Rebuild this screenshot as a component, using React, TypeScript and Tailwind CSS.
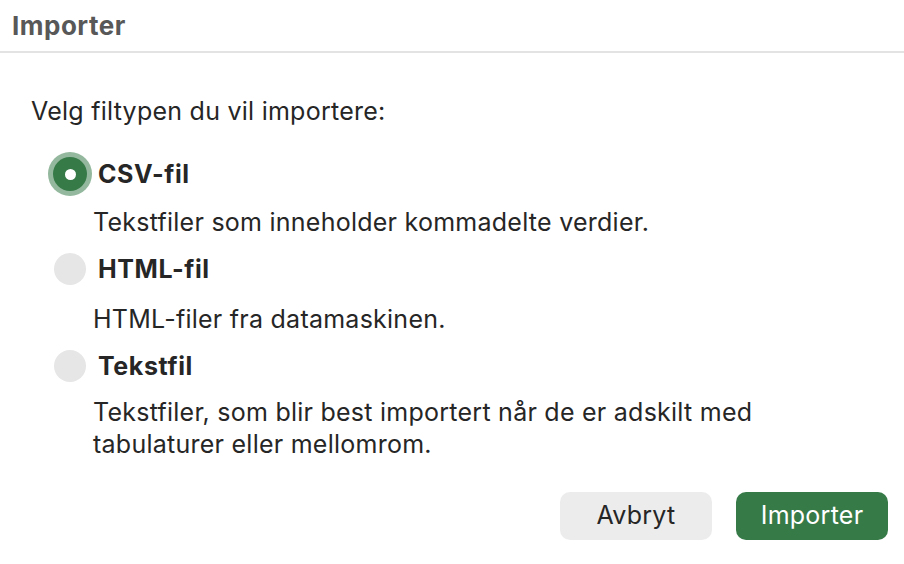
import React from "react";

const font = { fontFamily: "Inter, 'Noto Sans', sans-serif" };

function Radio({ checked }: { checked?: boolean }) {
  if (checked) {
    return (
      <div className="w-[44px] h-[44px] rounded-full bg-[#93b89d] flex items-center justify-center shrink-0">
        <div className="w-[34px] h-[34px] rounded-full bg-[#367a48] flex items-center justify-center">
          <div className="w-[11px] h-[11px] rounded-full bg-white" />
        </div>
      </div>
    );
  }
  return (
    <div className="w-[44px] h-[44px] flex items-center justify-center shrink-0">
      <div className="w-[32px] h-[32px] rounded-full bg-[#e6e6e6]" />
    </div>
  );
}

export default function App() {
  return (
    <div className="w-[904px] h-[564px] bg-white text-[#262626] overflow-hidden tracking-[0.25px]" style={font}>
      <div className="h-[53px] border-b-2 border-[#e3e3e3] flex items-center px-[12px]">
        <span className="text-[26px] font-bold text-[#585858] leading-none tracking-[0.5px]">Importer</span>
      </div>
      <div className="pt-[42px] pl-[31px]">
        <div className="text-[25px] leading-[32px]">Velg filtypen du vil importere:</div>
        <div className="mt-[23px] pl-[17px]">
          <div className="flex items-center gap-[6px] h-[48px]">
            <Radio checked />
            <span className="text-[25px] font-bold leading-none tracking-[0.6px]">CSV-fil</span>
          </div>
          <div className="pl-[45px] text-[25px] leading-[32px] mt-[8px]">Tekstfiler som inneholder kommadelte verdier.</div>
          <div className="flex items-center gap-[6px] h-[48px] mt-[7px]">
            <Radio />
            <span className="text-[25px] font-bold leading-none tracking-[0.6px]">HTML-fil</span>
          </div>
          <div className="pl-[45px] text-[25px] leading-[32px] mt-[10px]">HTML-filer fra datamaskinen.</div>
          <div className="flex items-center gap-[6px] h-[48px] mt-[7px]">
            <Radio />
            <span className="text-[25px] font-bold leading-none tracking-[0.6px]">Tekstfil</span>
          </div>
          <div className="pl-[45px] text-[25px] leading-[32px] mt-[6px]">
            Tekstfiler, som blir best importert når de er adskilt med
            <br />
            tabulaturer eller mellomrom.
          </div>
        </div>
      </div>
      <div className="flex justify-end gap-[24px] pr-[16px] mt-[32px]">
        <button className="w-[152px] h-[48px] rounded-[10px] bg-[#ececec] text-[25px] text-[#262626]">Avbryt</button>
        <button className="w-[152px] h-[48px] rounded-[10px] bg-[#367a48] text-[25px] text-white">Importer</button>
      </div>
    </div>
  );
}
